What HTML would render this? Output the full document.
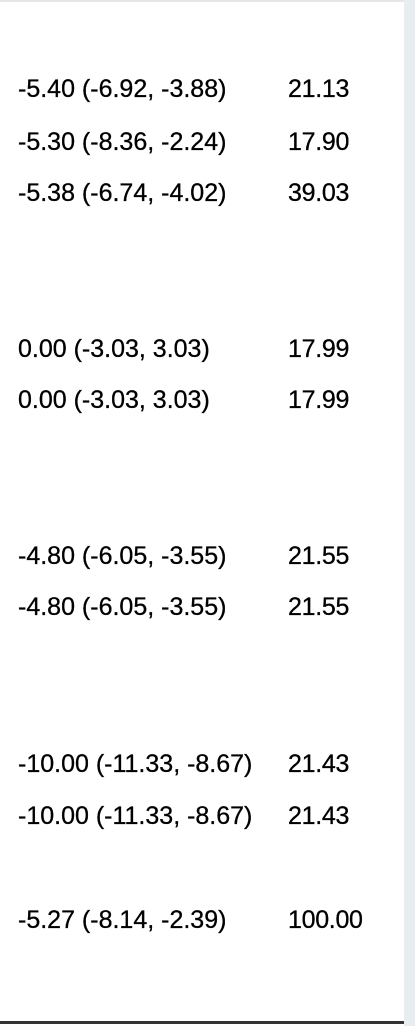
<!DOCTYPE html>
<html><head><style>
html,body{margin:0;padding:0;width:415px;height:1026px;overflow:hidden;background:#fff;}
body{position:relative;font-family:"Liberation Sans",Arial,sans-serif;font-size:25px;color:#000;}
.strip{position:absolute;left:404px;top:0;width:11px;height:1026px;background:#e8eef0;}
.top{position:absolute;left:0;top:0;width:404px;height:2px;background:#e6e6e6;}
.bot{position:absolute;left:0;top:1021px;width:404px;height:3px;background:#333;}
.r{position:absolute;left:18px;line-height:24px;letter-spacing:0px;white-space:nowrap;-webkit-text-stroke:0.3px #000;}
.v{position:absolute;left:288px;line-height:24px;letter-spacing:-0.3px;-webkit-text-stroke:0.3px #000;}
</style></head><body>
<div class="strip"></div><div class="top"></div><div class="bot"></div>
<div class="r" style="top:77px">-5.40 (-6.92, -3.88)</div><div class="v" style="top:77px">21.13</div>
<div class="r" style="top:130px">-5.30 (-8.36, -2.24)</div><div class="v" style="top:130px">17.90</div>
<div class="r" style="top:181px">-5.38 (-6.74, -4.02)</div><div class="v" style="top:181px">39.03</div>
<div class="r" style="top:337px">0.00 (-3.03, 3.03)</div><div class="v" style="top:337px">17.99</div>
<div class="r" style="top:388px">0.00 (-3.03, 3.03)</div><div class="v" style="top:388px">17.99</div>
<div class="r" style="top:544px">-4.80 (-6.05, -3.55)</div><div class="v" style="top:544px">21.55</div>
<div class="r" style="top:595px">-4.80 (-6.05, -3.55)</div><div class="v" style="top:595px">21.55</div>
<div class="r" style="top:752px">-10.00 (-11.33, -8.67)</div><div class="v" style="top:752px">21.43</div>
<div class="r" style="top:804px">-10.00 (-11.33, -8.67)</div><div class="v" style="top:804px">21.43</div>
<div class="r" style="top:908px">-5.27 (-8.14, -2.39)</div><div class="v" style="top:908px">100.00</div>
</body></html>
